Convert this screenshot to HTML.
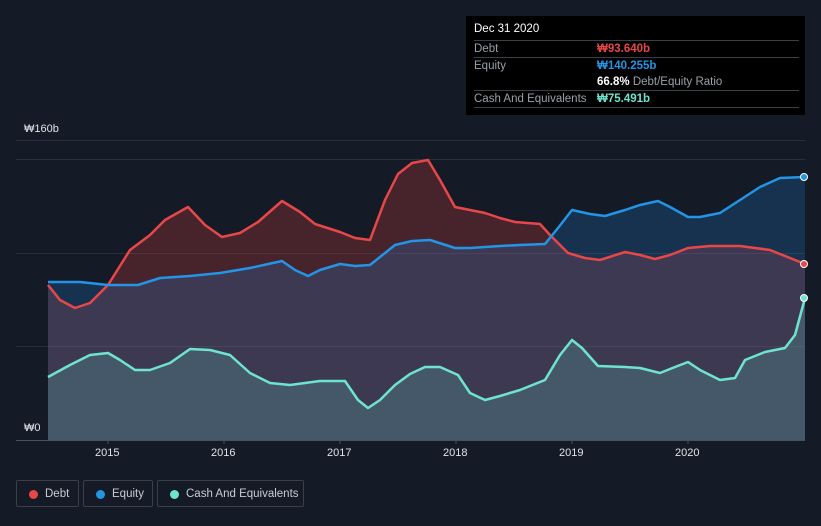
<!DOCTYPE html>
<html><head><meta charset="utf-8"><style>
body{margin:0;width:821px;height:526px;background:#151b26;font-family:"Liberation Sans",sans-serif;overflow:hidden;position:relative}
.tt{position:absolute;left:466px;top:16px;width:339px;height:99px;background:#000;color:#fff;font-size:11.5px}
.row{position:absolute;left:8px;width:325px;border-top:1px solid #3a3f48;height:16px;line-height:16px}
.row span{position:absolute;left:123px;font-weight:bold}
.lab{color:#9aa0a8}
.leg{position:absolute;top:480px;height:27px;border:1px solid #3a3f48;border-radius:2px;color:#c8ccd2;font-size:11.5px;line-height:26px;box-sizing:border-box;white-space:nowrap}
.leg i{position:absolute;left:12px;top:9px;width:9px;height:9px;border-radius:50%}
.leg b{font-weight:normal;position:absolute;left:28px}
.ax{position:absolute;color:#e0e3e8;font-size:11px}
</style></head><body>
<svg width="821" height="526" style="position:absolute;left:0;top:0">
<g stroke="#2a303b" stroke-width="1">
<line x1="16" y1="140.5" x2="805" y2="140.5"/><line x1="16" y1="159.5" x2="805" y2="159.5"/><line x1="16" y1="253.5" x2="805" y2="253.5"/><line x1="16" y1="346.5" x2="805" y2="346.5"/>
</g>
<polygon fill="rgba(200,60,60,0.28)" points="48,440 48,285 60,300 75,308 90,303 108,285 130,250 150,235 165,220 188,207 205,225 222,237 240,233 258,222 282,201 300,212 315,224 340,232 355,238 370,240 385,200 398,174 412,163 428,160 440,180 455,207 470,210 485,213 500,218 515,222 540,224 550,235 568,253 585,258 600,260 625,252 640,255 655,259 670,255 688,248 710,246 740,246 770,250 805,264 805,440"/>
<polygon fill="rgba(33,120,200,0.25)" points="48,440 48,282 80,282 108,285 138,285 160,278 190,276 220,273 250,268 282,261 295,270 308,276 320,270 340,264 355,266 370,265 395,245 412,241 430,240 455,248 470,248 500,246 520,245 545,244 558,228 572,210 590,214 605,216 625,210 640,205 658,201 670,207 688,217 700,217 720,213 740,200 760,187 780,178 805,177 805,440"/>
<polygon fill="rgba(100,200,190,0.22)" points="48,440 48,377 70,365 90,355 108,353 120,360 135,370 150,370 170,363 190,349 210,350 230,355 250,373 270,383 290,385 320,381 345,381 358,400 368,408 380,400 395,385 410,374 425,367 440,367 458,375 470,393 485,400 500,396 520,390 545,380 560,355 572,340 582,348 598,366 625,367 640,368 660,373 675,367 688,362 700,370 720,380 735,378 745,360 765,352 785,348 795,335 805,298 805,440"/>
<g fill="none" stroke-width="2.5" stroke-linejoin="round">
<polyline stroke="#e8474a" points="48,285 60,300 75,308 90,303 108,285 130,250 150,235 165,220 188,207 205,225 222,237 240,233 258,222 282,201 300,212 315,224 340,232 355,238 370,240 385,200 398,174 412,163 428,160 440,180 455,207 470,210 485,213 500,218 515,222 540,224 550,235 568,253 585,258 600,260 625,252 640,255 655,259 670,255 688,248 710,246 740,246 770,250 805,264"/>
<polyline stroke="#2394e6" points="48,282 80,282 108,285 138,285 160,278 190,276 220,273 250,268 282,261 295,270 308,276 320,270 340,264 355,266 370,265 395,245 412,241 430,240 455,248 470,248 500,246 520,245 545,244 558,228 572,210 590,214 605,216 625,210 640,205 658,201 670,207 688,217 700,217 720,213 740,200 760,187 780,178 805,177"/>
<polyline stroke="#6ee4d0" points="48,377 70,365 90,355 108,353 120,360 135,370 150,370 170,363 190,349 210,350 230,355 250,373 270,383 290,385 320,381 345,381 358,400 368,408 380,400 395,385 410,374 425,367 440,367 458,375 470,393 485,400 500,396 520,390 545,380 560,355 572,340 582,348 598,366 625,367 640,368 660,373 675,367 688,362 700,370 720,380 735,378 745,360 765,352 785,348 795,335 805,298"/>
</g>
<circle cx="804" cy="264" r="3.5" fill="#e8474a" stroke="#fff" stroke-width="1"/>
<circle cx="804" cy="177" r="3.5" fill="#2394e6" stroke="#fff" stroke-width="1"/>
<circle cx="804" cy="298" r="3.5" fill="#6ee4d0" stroke="#fff" stroke-width="1"/>
<line x1="16" y1="440.5" x2="805" y2="440.5" stroke="#4a505a"/>
<g stroke="#4a505a"><line x1="108" y1="440" x2="108" y2="444"/><line x1="224" y1="440" x2="224" y2="444"/><line x1="340" y1="440" x2="340" y2="444"/><line x1="456" y1="440" x2="456" y2="444"/><line x1="572" y1="440" x2="572" y2="444"/><line x1="688" y1="440" x2="688" y2="444"/></g>
<rect x="16" y="420" width="32" height="20" fill="#151b26"/>
</svg>
<div class="ax" style="left:24px;top:123px">₩160b</div>
<div class="ax" style="left:24px;top:422px">₩0</div>
<div class="ax" style="left:95px;top:447px">2015</div>
<div class="ax" style="left:211px;top:447px">2016</div>
<div class="ax" style="left:327px;top:447px">2017</div>
<div class="ax" style="left:443px;top:447px">2018</div>
<div class="ax" style="left:559px;top:447px">2019</div>
<div class="ax" style="left:675px;top:447px">2020</div>
<div class="tt">
<div style="position:absolute;left:8px;top:7px">Dec 31 2020</div>
<div class="row" style="top:24px"><a class="lab">Debt</a><span style="color:#e8474a">₩93.640b</span></div>
<div class="row" style="top:41px"><a class="lab">Equity</a><span style="color:#2394e6">₩140.255b</span></div>
<div style="position:absolute;left:131px;top:58px;height:16px;line-height:16px"><b>66.8%</b> <a class="lab">Debt/Equity Ratio</a></div>
<div class="row" style="top:74px"><a class="lab">Cash And Equivalents</a><span style="color:#6ee4d0">₩75.491b</span></div>
<div class="row" style="top:91px;height:0"></div>
</div>
<div class="leg" style="left:16px;width:63px"><i style="background:#e8474a"></i><b>Debt</b></div>
<div class="leg" style="left:83px;width:70px"><i style="background:#2394e6"></i><b>Equity</b></div>
<div class="leg" style="left:157px;width:147px"><i style="background:#6ee4d0"></i><b>Cash And Equivalents</b></div>
</body></html>
